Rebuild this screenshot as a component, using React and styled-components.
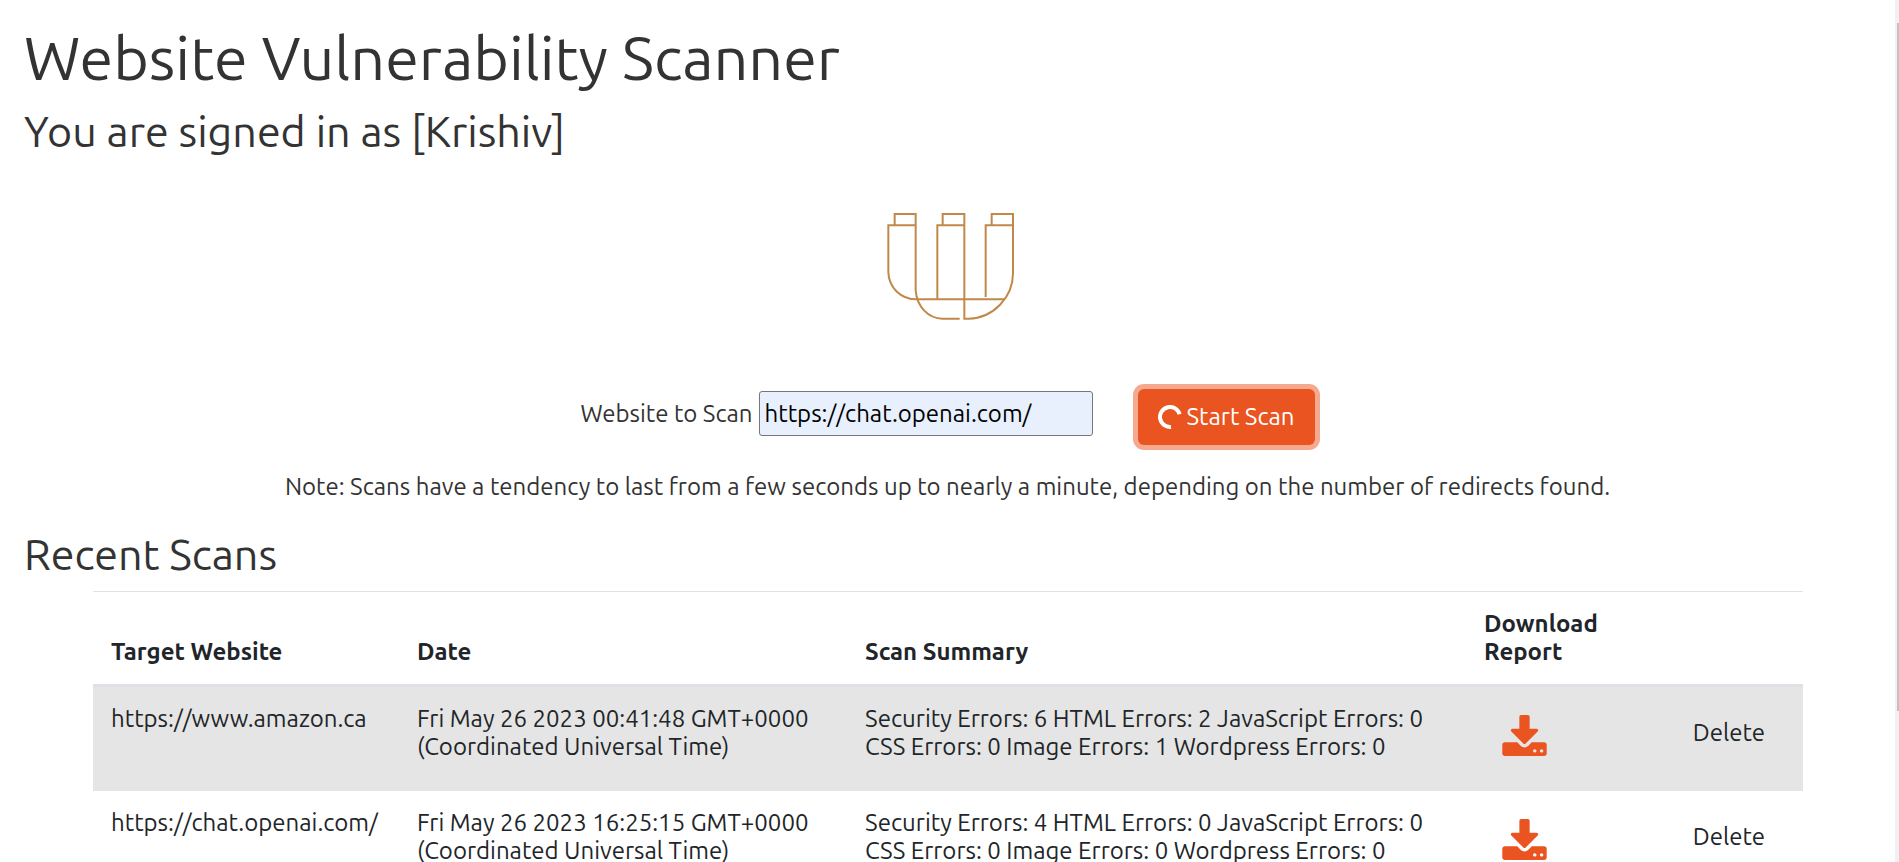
import React from 'react';
import styled, { createGlobalStyle } from 'styled-components';

const GlobalStyle = createGlobalStyle`
  *, *::before, *::after { box-sizing: border-box; }
  body {
    margin: 0;
    background: #fff;
    color: #333;
    font-family: Ubuntu, "Noto Sans", sans-serif;
    font-size: 24px;
    line-height: 28px;
  }
`;

const Shell = styled.div`
  display: flex;
  height: 100vh;
  overflow: hidden;
`;

const Page = styled.main`
  flex: 1;
  min-width: 0;
  padding-top: 22px;
  overflow: hidden;
`;

const ScrollTrack = styled.div`
  flex: none;
  width: 4px;
  padding: 23px 0 151px 2px;
  background: #f1f1f1;
`;

const ScrollThumb = styled.div`
  height: 100%;
  background: #c1c1c1;
`;

const Title = styled.h1`
  margin: 0 24px 12px;
  font-size: 61px;
  font-weight: 400;
  line-height: 72px;
`;

const Subtitle = styled.h2`
  margin: 0 24px;
  font-size: 43px;
  font-weight: 400;
  line-height: 50px;
`;

const Logo = styled.svg`
  display: block;
  width: 176px;
  height: 150px;
  margin: 34px auto 49px;
  fill: none;
  stroke: #c0894a;
  stroke-width: 6;
`;

const ScanForm = styled.form`
  display: flex;
  justify-content: center;
  align-items: flex-start;
  gap: 45px;
`;

const Field = styled.div`
  display: flex;
  align-items: center;
  gap: 6px;
  padding-top: 2px;
`;

const UrlInput = styled.input`
  width: 334px;
  height: 45px;
  padding: 0 5px;
  border: 1px solid #767676;
  border-radius: 3px;
  background: #e8f0fe;
  color: #000;
  font: inherit;
`;

const StartButton = styled.button`
  display: flex;
  align-items: center;
  gap: 5px;
  height: 56px;
  padding: 0 20px;
  border: 0;
  border-radius: 6px;
  background: #e95420;
  box-shadow: 0 0 0 5px #f5a98f;
  color: #fff;
  font: inherit;
`;

const Spinner = styled.svg`
  width: 24px;
  height: 24px;
  fill: none;
  stroke: #fff;
  stroke-width: 4;
`;

const Note = styled.p`
  margin: 28px 24px;
  text-align: center;
`;

const ScanTable = styled.table`
  width: calc(100% - 185px);
  margin: 12px 92px 0 93px;
  border-top: 1px solid #dee2e6;
  border-spacing: 0;
  table-layout: fixed;
  color: #212529;
`;

const HeadCell = styled.th`
  width: ${(p) => p.$width};
  padding: 18px;
  border-bottom: 3px solid #dee2e6;
  font-weight: 700;
  text-align: left;
  vertical-align: bottom;
`;

const Row = styled.tr`
  background: ${(p) => (p.$striped ? '#e5e5e5' : 'transparent')};

  & + & > td { border-top: 1px solid #dee2e6; }
`;

const Cell = styled.td`
  padding: 18px;
  vertical-align: top;
`;

const DownloadLink = styled.a`
  display: block;
  height: 68px;
  padding: 10px 18px;
  color: #e95420;
`;

const DownloadGlyph = styled.svg`
  display: block;
  width: 45px;
  height: 41px;
  fill: currentColor;
`;

const DeleteButton = styled.button`
  padding: 14px 0;
  border: 0;
  background: none;
  color: inherit;
  font: inherit;
  line-height: 28px;
`;

const scans = [
  {
    site: 'https://www.amazon.ca',
    date: 'Fri May 26 2023 00:41:48 GMT+0000 (Coordinated Universal Time)',
    summary:
      'Security Errors: 6 HTML Errors: 2 JavaScript Errors: 0 CSS Errors: 0 Image Errors: 1 Wordpress Errors: 0',
  },
  {
    site: 'https://chat.openai.com/',
    date: 'Fri May 26 2023 16:25:15 GMT+0000 (Coordinated Universal Time)',
    summary:
      'Security Errors: 4 HTML Errors: 0 JavaScript Errors: 0 CSS Errors: 0 Image Errors: 0 Wordpress Errors: 0',
  },
];

function BrandLogo() {
  return (
    <Logo viewBox="0 0 528 450" aria-hidden="true">
      <path d="M104 106V72H167V302C171 350 205 386 247 386H299" />
      <path d="M167 106H85V246C86 292 122 328 170 328H433" />
      <path d="M248 106V72H313V386H326C400 384 459 322 459 250V72H395V106" />
      <path d="M313 106H232V328" />
      <path d="M459 106H377V321" />
    </Logo>
  );
}

function DownloadIcon() {
  return (
    <DownloadGlyph viewBox="0 0 1664 1536" aria-hidden="true">
      <path d="M1280 1344q0-26-19-45t-45-19-45 19-19 45 19 45 45 19 45-19 19-45zm256 0q0-26-19-45t-45-19-45 19-19 45 19 45 45 19 45-19 19-45zm128-224v320q0 40-28 68t-68 28h-1472q-40 0-68-28t-28-68v-320q0-40 28-68t68-28h465l135 136q58 56 136 56t136-56l136-136h464q40 0 68 28t28 68zm-325-569q17 41-14 70l-448 448q-18 19-45 19t-45-19l-448-448q-31-29-14-70 17-39 59-39h256v-448q0-26 19-45t45-19h256q26 0 45 19t19 45v448h256q42 0 59 39z" />
    </DownloadGlyph>
  );
}

export default function App() {
  return (
    <>
      <GlobalStyle />
      <Shell>
        <Page>
          <Title>Website Vulnerability Scanner</Title>
          <Subtitle>You are signed in as [Krishiv]</Subtitle>
          <BrandLogo />
          <ScanForm onSubmit={(e) => e.preventDefault()}>
            <Field>
              <label htmlFor="site">Website to Scan</label>
              <UrlInput id="site" type="text" defaultValue="https://chat.openai.com/" />
            </Field>
            <StartButton type="submit">
              <Spinner viewBox="0 0 24 24" aria-hidden="true">
                <path d="M21.6 9.2A10 10 0 1 0 13 21.9" />
              </Spinner>
              Start Scan
            </StartButton>
          </ScanForm>
          <Note>
            Note: Scans have a tendency to last from a few seconds up to nearly a minute, depending
            on the number of redirects found.
          </Note>
          <Subtitle>Recent Scans</Subtitle>
          <ScanTable>
            <thead>
              <tr>
                <HeadCell $width="17.9%">Target Website</HeadCell>
                <HeadCell $width="26.2%">Date</HeadCell>
                <HeadCell $width="36.2%">Scan Summary</HeadCell>
                <HeadCell $width="12.2%">Download Report</HeadCell>
                <HeadCell $width="7.5%" />
              </tr>
            </thead>
            <tbody>
              {scans.map((scan, i) => (
                <Row key={scan.site} $striped={i % 2 === 0}>
                  <Cell>{scan.site}</Cell>
                  <Cell>{scan.date}</Cell>
                  <Cell>{scan.summary}</Cell>
                  <Cell>
                    <DownloadLink href="#report" aria-label="Download report">
                      <DownloadIcon />
                    </DownloadLink>
                  </Cell>
                  <Cell>
                    <DeleteButton type="button">Delete</DeleteButton>
                  </Cell>
                </Row>
              ))}
            </tbody>
          </ScanTable>
        </Page>
        <ScrollTrack aria-hidden="true">
          <ScrollThumb />
        </ScrollTrack>
      </Shell>
    </>
  );
}
